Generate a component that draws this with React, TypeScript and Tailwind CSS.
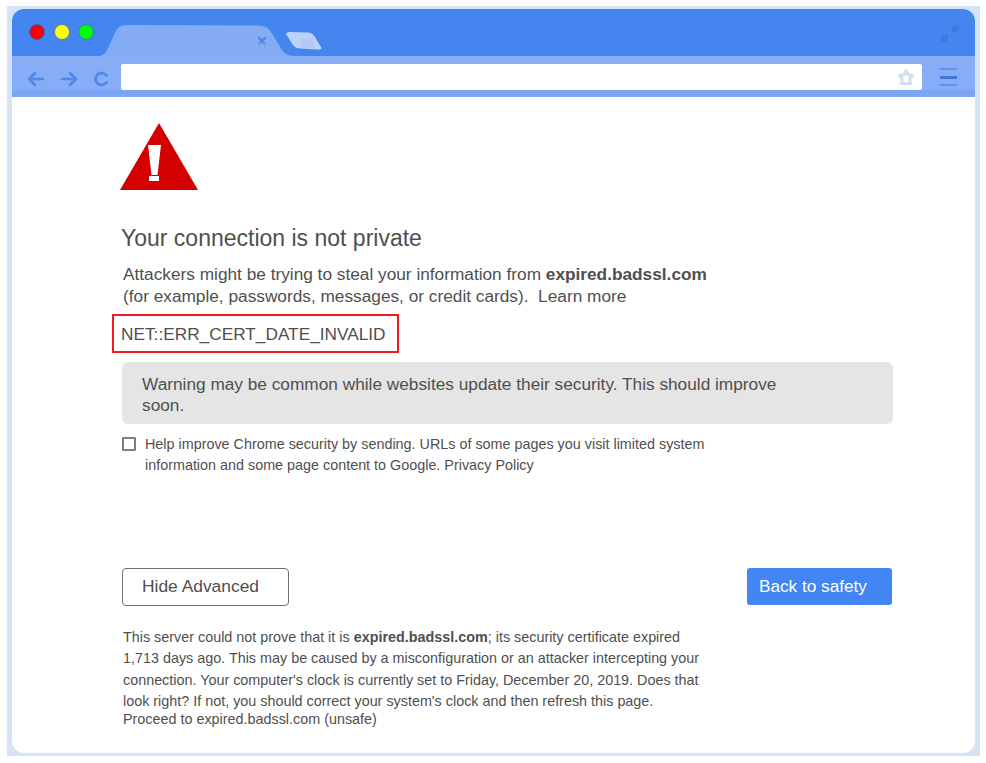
const font = "font-['Liberation_Sans',Arial,sans-serif]";

function TabShapes() {
  return (
    <svg width="240" height="47" viewBox="0 0 240 47" className="shrink-0">
      {/* active tab */}
      <path d="M0 47 C5 47 8 45 10 41 L18 24 C21 17 24 16 32 16 L160 16.500 C168 17 171 18 174 23 L185 41 C188 45 192 47 198 47 Z" fill="#84acf5" />
      {/* close mark */}
      <path d="M161 27 L165 30 L169 27 L169 30 L166.500 32 L169 35 L161 35 L163.500 32 L161 30 Z" fill="#4f86e8" />
      <circle cx="165" cy="37" r="3" fill="none" stroke="#7aa4f0" strokeWidth="1" />
      {/* new tab button */}
      <path d="M189 25 C189 23.500 191 23 193 23 L210 23.500 C214 23.500 216 25 218 28 L224 38 C225 40 224 40.500 221 40.500 L203 39.500 C200 39.500 198 38.500 196 36 Z" fill="#bcd2f7" />
      <path d="M203 30 L215 29 L219 39 L204 38.500 Z" fill="#b2caf5" />
    </svg>
  );
}

function NavIcons() {
  return (
    <div className="flex items-center gap-[15px] pl-[15px] pt-[15px] w-[109px] shrink-0">
      <svg width="18" height="16" viewBox="0 0 18 16" fill="none" stroke="#4d88ec" strokeWidth="2.600" strokeLinecap="round" strokeLinejoin="round">
        <path d="M16 8 H2.500 M8 2 L2 8 L8 14" />
      </svg>
      <svg width="18" height="16" viewBox="0 0 18 16" fill="none" stroke="#4d88ec" strokeWidth="2.600" strokeLinecap="round" strokeLinejoin="round">
        <path d="M2 8 H15.500 M10 2 L16 8 L10 14" />
      </svg>
      <svg width="16" height="16" viewBox="0 0 16 16" fill="none" stroke="#4d88ec" strokeWidth="2.800" strokeLinecap="round">
        <path d="M13.500 4.500 A6 6 0 1 0 13.500 11.500" />
      </svg>
    </div>
  );
}

export default function App() {
  return (
    <div className={`${font} w-[986px] h-[763px] bg-white pt-[6px] pl-[7px]`}>
      <div className="w-[973px] h-[750px] bg-[#d5e3f6] pt-[3px] pb-[3px] pl-[5px] pr-[5px]">
        <div className="h-full bg-white rounded-tl-[12px] rounded-tr-[12px] rounded-bl-[12px] rounded-br-[12px] overflow-hidden flex flex-col">
          {/* tab strip */}
          <div className="h-[47px] bg-[#4585f0] flex items-start shrink-0">
            <div className="flex gap-[8.500px] pl-[17px] pt-[15px] w-[85px] shrink-0">
              <span className="w-[16px] h-[16px] rounded-full bg-[#ff0000] border border-[#3a5fd0] shrink-0" />
              <span className="w-[16px] h-[16px] rounded-full bg-[#ffff00] border border-[#6a80b8] shrink-0" />
              <span className="w-[16px] h-[16px] rounded-full bg-[#00ff00] border border-[#2f7fc0] shrink-0" />
            </div>
            <TabShapes />
            <svg width="22" height="22" viewBox="0 0 22 22" className="ml-auto mr-[14px] mt-[13px]" fill="#3f78da">
              <path d="M12 7 L15 4 L20 3 L19 8 L16 10 L14 10 Z" />
              <circle cx="5" cy="17" r="3.500" />
              <path d="M3 17 L8 12 L10 14 L6 19 Z" />
            </svg>
          </div>
          {/* toolbar */}
          <div className="h-[41px] bg-[#86adf5] border-b-[7px] border-[#7ba6f4] flex items-start shrink-0">
            <NavIcons />
            <div className="w-[801px] h-[26px] mt-[8px] bg-white rounded-[2px] flex items-center justify-end pr-[7px] shrink-0">
              <svg width="18" height="18" viewBox="0 0 18 18" fill="none" stroke="#d3e0f3" strokeWidth="3" strokeLinejoin="round">
                <path d="M9 2.500 L11 6.800 L15.500 7.500 L12.800 11 L13.500 15.500 L4.500 15.500 L5.200 11 L2.500 7.500 L7 6.800 Z" />
              </svg>
            </div>
            <div className="ml-[18px] mt-[12px] flex flex-col w-[17px]">
              <span className="h-[2px] bg-[#5e92ee]" />
              <span className="h-[3px] mt-[6px] bg-[#3f78da]" />
              <span className="h-[2px] mt-[5px] bg-[#5e92ee]" />
            </div>
          </div>
          {/* page */}
          <div className="flex-1 pl-[109px] pr-[82px] text-[#4f4f4f]">
            <svg width="78" height="67" viewBox="0 0 78 67" className="mt-[26px] -ml-[1px] block">
              <path d="M39 0 L78 67 H0 Z" fill="#d30000" />
              <path d="M28 22 H41 L37.500 52 H31.500 Z M29 53 H39 V58 H29 Z" fill="#fff" />
            </svg>
            <h1 className="mt-[34px] text-[23px] leading-[28px] font-normal">Your connection is not private</h1>
            <p className="mt-[11px] ml-[2px] text-[17.250px] leading-[22px]">
              Attackers might be trying to steal your information from <b>expired.badssl.com</b>
              <br />
              (for example, passwords, messages, or credit cards).&nbsp; Learn more
            </p>
            <div className="mt-[7px] -ml-[9px] w-[287px] h-[39px] border-2 border-[#f01c24] flex items-center pl-[7px] pt-[3px] text-[17.250px]">
              NET::ERR_CERT_DATE_INVALID
            </div>
            <div className="mt-[9px] ml-[1px] w-[771px] h-[62px] bg-[#e5e5e5] rounded-[6px] pl-[20px] pt-[12px] text-[17.250px] leading-[21px]">
              Warning may be common while websites update their security. This should improve
              <br />
              soon.
            </div>
            <div className="mt-[10px] ml-[1px] flex gap-[9px]">
              <span className="mt-[3px] w-[14px] h-[14px] border-2 border-[#7f7f7f] rounded-[1px] bg-white shrink-0" />
              <p className="text-[14.360px] leading-[21px]">
                Help improve Chrome security by sending. URLs of some pages you visit limited system
                <br />
                information and some page content to Google. Privacy Policy
              </p>
            </div>
            <div className="mt-[92px] ml-[1px] w-[770px] flex justify-between items-start">
              <button className="w-[167px] h-[38px] border border-[#707070] rounded-[4px] bg-white text-left pl-[19px] pb-[2px] text-[17.400px] text-[#4f4f4f]">
                Hide Advanced
              </button>
              <button className="w-[145px] h-[37px] bg-[#4285f4] rounded-[3px] text-left pl-[12px] text-[17.200px] text-white">
                Back to safety
              </button>
            </div>
            <div className="mt-[21px] ml-[2px] text-[14.360px] leading-[21.330px]">
              <p>
                This server could not prove that it is <b>expired.badssl.com</b>; its security certificate expired
                <br />
                1,713 days ago. This may be caused by a misconfiguration or an attacker intercepting your
                <br />
                connection. Your computer's clock is currently set to Friday, December 20, 2019. Does that
                <br />
                look right? If not, you should correct your system's clock and then refresh this page.
              </p>
              <p className="-mt-[3px]">Proceed to expired.badssl.com (unsafe)</p>
            </div>
          </div>
        </div>
      </div>
    </div>
  );
}
